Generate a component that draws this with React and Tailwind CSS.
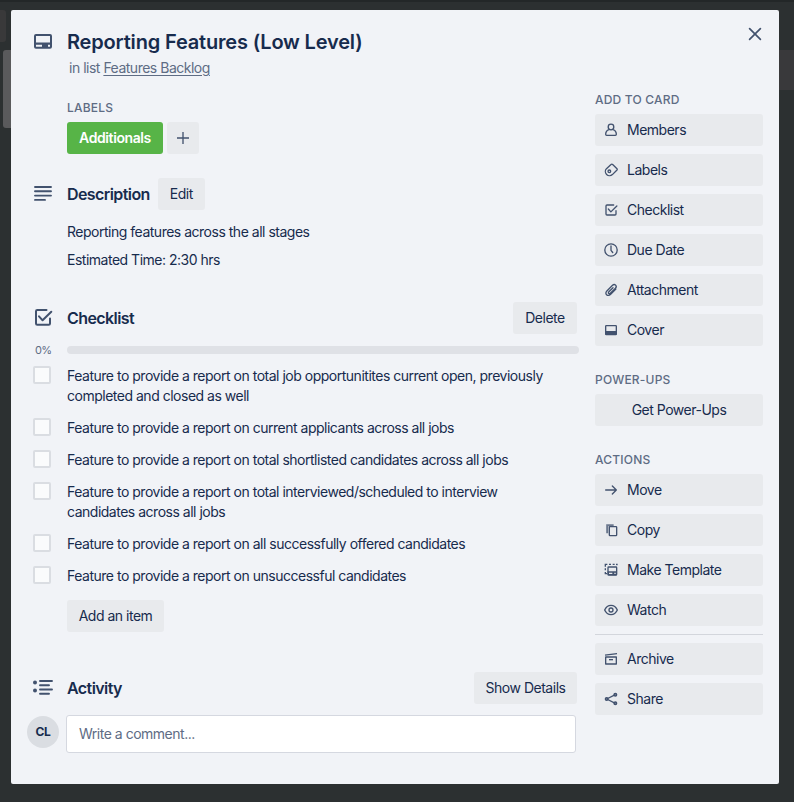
import React from "react";

function Icon({ className = "size-4", children }) {
  return (
    <svg viewBox="0 0 24 24" fill="none" stroke="currentColor" strokeWidth="2" className={`shrink-0 text-[#42526e] ${className}`}>
      {children}
    </svg>
  );
}

const icons = {
  card: (
    <path fill="currentColor" stroke="none" fillRule="evenodd" d="M5 4a2 2 0 0 0-2 2v10.700a2 2 0 0 0 2 2h14a2 2 0 0 0 2-2V6a2 2 0 0 0-2-2H5Zm0 2h14v6.500H5V6Zm0 8.800v1.900h6v-1.900H5Zm12 0v1.900h2v-1.900h-2Z" />
  ),
  members: (
    <>
      <circle cx="12" cy="7.500" r="4.200" />
      <path d="M9 11.500c-3.500 1.200-5 3.500-5 7 0 .9.6 1.500 1.500 1.500h13c.9 0 1.500-.6 1.500-1.500 0-3.500-1.500-5.800-5-7" />
    </>
  ),
  labels: (
    <>
      <path d="M12 3.800 5.200 10a6.300 6.300 0 0 0 8.900 8.900L21 12a1.500 1.500 0 0 0 0-2l-6.500-6.200a1.800 1.800 0 0 0-2.500 0Z" strokeLinejoin="round" />
      <circle cx="9.500" cy="14" r="2" />
    </>
  ),
  check: (
    <path d="M16 4.500H6A1.500 1.500 0 0 0 4.500 6v12A1.500 1.500 0 0 0 6 19.500h12a1.500 1.500 0 0 0 1.500-1.500v-5M8 10.500l3.800 4.300L20.800 6" strokeLinejoin="round" strokeLinecap="round" />
  ),
  checkLarge: (
    <path d="M15.500 4H6.300A1.300 1.300 0 0 0 5 5.300v12.100a1.300 1.300 0 0 0 1.300 1.300h11.400a1.300 1.300 0 0 0 1.300-1.300V12.500M8 10.300l3.600 4L20.300 5.700" strokeLinejoin="round" strokeLinecap="round" />
  ),
  clock: (
    <>
      <circle cx="12" cy="12" r="9.300" />
      <path d="M12 6v6.500l2.600 3.300" strokeLinecap="round" strokeLinejoin="round" />
    </>
  ),
  clip: (
    <path d="m15 8.500-6.200 6.200c-.9.900-.9 1.800-.2 2.400.7.700 1.600.6 2.400-.2l7.700-7.700c1.400-1.400 1.400-3.300.2-4.500s-3.200-1.200-4.600.2l-8.500 8.500c-1.900 1.900-1.900 4.200-.4 5.700s3.900 1.400 5.700-.4l8.200-8.200" strokeLinecap="round" />
  ),
  cover: (
    <>
      <rect x="4" y="5.500" width="16" height="13.500" rx="1" />
      <path fill="currentColor" stroke="none" d="M3.500 13.500h17v5.500h-17z" />
    </>
  ),
  move: <path d="M4 12h16M14 6l6 6-6 6" strokeLinejoin="round" strokeLinecap="round" />,
  copy: (
    <>
      <path d="M6.300 17V4.700H16" strokeWidth="3" strokeOpacity=".75" />
      <rect x="9.500" y="7" width="11" height="13.500" rx="1" />
    </>
  ),
  template: (
    <>
      <path d="M3.500 7V3.500h3M9 3.500h3M14.500 3.500h3M19.500 3.500H21v1.500M3.500 9.500v3M3.500 15v2.500H6" strokeWidth="2" />
      <rect x="7.500" y="7.500" width="13" height="12" rx="1" />
      <path fill="currentColor" stroke="none" fillRule="evenodd" d="M7 14h14v6H7zm2 2v2h5v-2zm8 0v2h2v-2z" />
    </>
  ),
  watch: (
    <>
      <path d="M2.500 12C4.500 7.500 8 5 12 5s7.500 2.500 9.500 7c-2 4.500-5.500 7-9.500 7s-7.500-2.500-9.500-7Z" strokeLinejoin="round" />
      <circle cx="12" cy="12" r="3" />
    </>
  ),
  archive: (
    <>
      <path d="M3 6.300 21 4" />
      <path d="M4 9h16v10.500H4Z" strokeLinejoin="round" />
      <path d="M9 13h6" />
    </>
  ),
  share: (
    <>
      <path d="m5.500 12 13-6.500M5.500 12l13 6.500" />
      <circle cx="5.500" cy="12" r="2" fill="currentColor" fillOpacity=".6" />
      <circle cx="18.500" cy="5.500" r="2" fill="currentColor" fillOpacity=".6" />
      <circle cx="18.500" cy="18.500" r="2" fill="currentColor" fillOpacity=".6" />
    </>
  ),
};

function SideButton({ icon, label }) {
  return (
    <button className="flex h-8 w-full items-center gap-2 rounded-[3px] bg-[#e8eaed] pl-2 text-left">
      <Icon>{icons[icon]}</Icon>
      <span>{label}</span>
    </button>
  );
}

function SideHeading({ children }) {
  return <h3 className="flex h-5 items-center text-[12px] font-medium tracking-[0.2px] text-[#5e6c84]">{children}</h3>;
}

function Button({ className = "", children }) {
  return <button className={`h-8 shrink-0 rounded-[3px] bg-[#e8eaed] text-center whitespace-nowrap ${className}`}>{children}</button>;
}

function SectionTitle({ children }) {
  return <h2 className="text-[16px] font-semibold tracking-[-0.58px]">{children}</h2>;
}

const items = [
  ["Feature to provide a report on total job opportunitites current open, previously", "completed and closed as well"],
  ["Feature to provide a report on current applicants across all jobs"],
  ["Feature to provide a report on total shortlisted candidates across all jobs"],
  ["Feature to provide a report on total interviewed/scheduled to interview", "candidates across all jobs"],
  ["Feature to provide a report on all successfully offered candidates"],
  ["Feature to provide a report on unsuccessful candidates"],
];

function Main() {
  return (
    <main className="w-[552px] pt-[10px]">
      <section className="pl-10">
        <h3 className="flex h-[15px] items-center text-[12px] font-medium tracking-[0.2px] text-[#5e6c84]">LABELS</h3>
        <div className="mt-[7px] flex gap-1">
          <span className="flex h-8 w-24 items-center justify-center rounded-[3px] bg-[#57b447] font-semibold tracking-[-0.4px] text-white">Additionals</span>
          <Button className="flex w-8 items-center justify-center">
            <Icon><path d="M12 3v18M3 12h18" /></Icon>
          </Button>
        </div>
      </section>

      <section className="mt-6">
        <div className="flex h-8 items-center">
          <div className="w-10 pl-1.5">
            <svg viewBox="0 0 20 18" className="h-[18px] w-5 text-[#42526e]" fill="none" stroke="currentColor" strokeWidth="1.900" strokeLinecap="round">
              <path d="M2 2h16M2 6.300h16M2 10.600h16M2 14.900h10" />
            </svg>
          </div>
          <SectionTitle>Description</SectionTitle>
          <Button className="ml-2 w-[47px]">Edit</Button>
        </div>
        <div className="flex flex-col gap-2 pt-3 pl-10">
          <p>Reporting features across the all stages</p>
          <p>Estimated Time: 2:30 hrs</p>
        </div>
      </section>

      <section className="mt-8">
        <div className="flex h-8 items-center pr-0.5">
          <div className="w-10 pl-1">
            <Icon className="size-6">{icons.checkLarge}</Icon>
          </div>
          <SectionTitle>Checklist</SectionTitle>
          <Button className="ml-auto w-16">Delete</Button>
        </div>
        <div className="mt-2 flex h-4 items-center">
          <span className="w-10 pl-2 text-[11px] tracking-[-0.6px] text-[#5e6c84]">0%</span>
          <div className="h-2 flex-1 rounded-full bg-[#dfe1e6]" />
        </div>
        <ul className="flex flex-col gap-3 pt-2">
          {items.map((lines) => (
            <li key={lines[0]} className="flex items-start pl-1.5">
              <span className="size-[18px] shrink-0 rounded-[2px] border-2 border-[#dadde2] bg-[#fafbfc]" />
              <p className="ml-4 whitespace-nowrap">
                {lines.map((line) => (
                  <span key={line} className="block">{line}</span>
                ))}
              </p>
            </li>
          ))}
        </ul>
        <Button className="mt-[14px] ml-10 w-[97px]">Add an item</Button>
      </section>

      <section className="mt-10">
        <div className="flex h-8 items-center pr-0.5">
          <div className="w-10 pl-1.5">
            <svg viewBox="0 0 20 18" className="h-[18px] w-5 text-[#42526e]" fill="none" stroke="currentColor" strokeWidth="1.900" strokeLinecap="round">
              <path d="M7 2h12M7 6.300h9M7 10.500h12M7 14.700h9" />
              <circle cx="2" cy="3.600" r="2" fill="currentColor" stroke="none" />
              <circle cx="2" cy="11.500" r="2" fill="currentColor" stroke="none" />
            </svg>
          </div>
          <SectionTitle>Activity</SectionTitle>
          <Button className="ml-auto w-[103px]">Show Details</Button>
        </div>
        <div className="mt-[11px] flex items-start pr-[3px]">
          <span className="mt-px flex size-8 items-center justify-center rounded-full bg-[#dadde2] text-[12px] font-bold tracking-[-0.3px]">CL</span>
          <div className="ml-[7px] flex h-[38px] flex-1 items-center rounded-[3px] border border-[#d5d8e0] bg-white pl-3 text-[#5e6c84]">Write a comment...</div>
        </div>
      </section>
    </main>
  );
}

function Sidebar() {
  return (
    <aside className="w-[168px]">
      <section className="flex flex-col gap-2">
        <div className="-mb-[4px]"><SideHeading>ADD TO CARD</SideHeading></div>
        <SideButton icon="members" label="Members" />
        <SideButton icon="labels" label="Labels" />
        <SideButton icon="check" label="Checklist" />
        <SideButton icon="clock" label="Due Date" />
        <SideButton icon="clip" label="Attachment" />
        <SideButton icon="cover" label="Cover" />
      </section>
      <section className="mt-6">
        <SideHeading>POWER-UPS</SideHeading>
        <Button className="mt-1 w-full">Get Power-Ups</Button>
      </section>
      <section className="mt-6 flex flex-col gap-2">
        <div className="-mb-[4px]"><SideHeading>ACTIONS</SideHeading></div>
        <SideButton icon="move" label="Move" />
        <SideButton icon="copy" label="Copy" />
        <SideButton icon="template" label="Make Template" />
        <SideButton icon="watch" label="Watch" />
        <hr className="border-[#d3d6dc]" />
        <SideButton icon="archive" label="Archive" />
        <SideButton icon="share" label="Share" />
      </section>
    </aside>
  );
}

export default function App() {
  return (
    <div className="relative h-[802px] w-[794px] overflow-hidden border-t-2 border-[#232728] bg-[#2c3031] font-['Inter','Liberation_Sans',sans-serif] text-[14px] leading-5 tracking-[-0.49px] text-[#172b4d]">
      <div className="absolute top-2 left-0 h-8 w-1.5 rounded-r-[3px] bg-[#39393a]" />
      <div className="absolute top-12 left-[3px] h-[78px] w-4 rounded-[3px] bg-[#5a5a5c]" />
      <div className="absolute top-12 right-0 h-10 w-4 bg-[#39393b]" />
      <div className="relative mt-2 ml-[11px] h-[774px] w-[768px] rounded-[2px] bg-[#f1f3f7] px-4">
        <header className="flex h-20 items-start">
          <div className="w-10 pt-5 pl-1">
            <Icon className="size-6">{icons.card}</Icon>
          </div>
          <div className="pt-5">
            <h1 className="text-[20px] leading-6 font-semibold tracking-[-0.17px]">Reporting Features (Low Level)</h1>
            <p className="mt-1 pl-0.5 text-[#5e6c84]">
              in list <a className="underline underline-offset-2">Features Backlog</a>
            </p>
          </div>
          <button className="mt-3 -mr-1 ml-auto p-1">
            <svg viewBox="0 0 16 16" className="size-4 text-[#42526e]" fill="none" stroke="currentColor" strokeWidth="1.700" strokeLinecap="round">
              <path d="m2.600 2.600 10.800 10.800M13.400 2.600 2.600 13.400" />
            </svg>
          </button>
        </header>
        <div className="flex gap-4">
          <Main />
          <Sidebar />
        </div>
      </div>
    </div>
  );
}
